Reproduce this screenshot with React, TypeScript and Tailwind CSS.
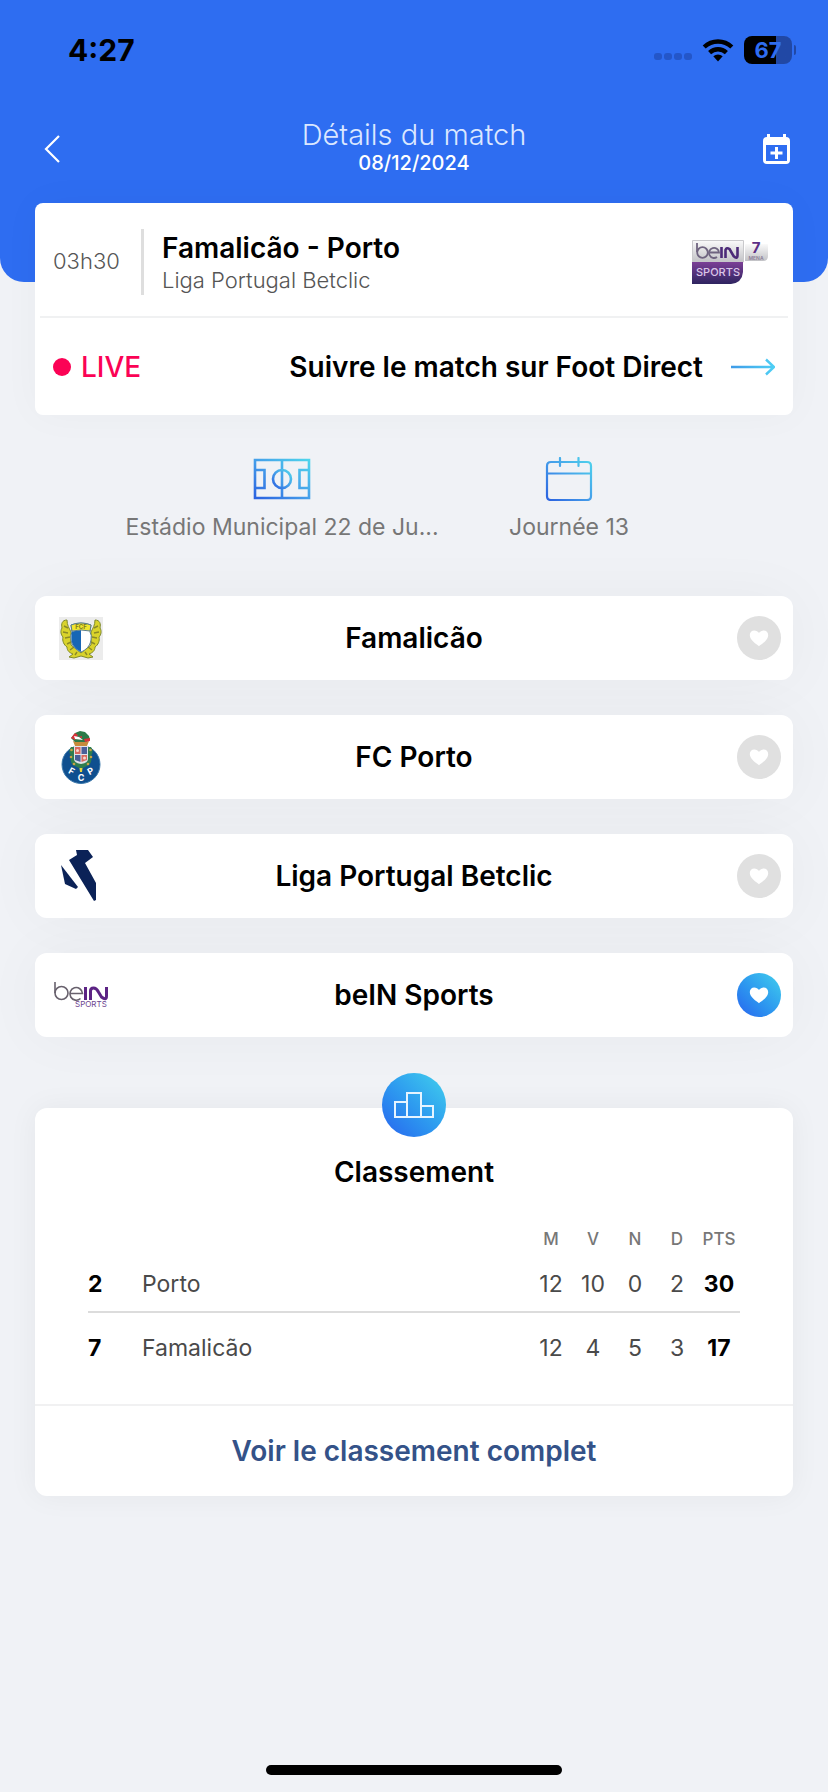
import { useState } from "react";
import type { ReactNode } from "react";

const FamalicaoLogo = () => (
  <svg width="44" height="43" viewBox="0 0 44 43" aria-hidden="true">
    <rect width="44" height="43" fill="#ececec" />
    <path
      d="M8 3c-5 0-6 4-5 8-2 3-1 7 1 9-1 4 1 8 4 10 0 4 3 6 6 7l-4 3 5 1 7-2 7 2 5-1-4-3c3-1 6-3 6-7 3-2 5-6 4-10 2-2 3-6 1-9 1-4 0-8-5-8 0 5-2 8-4 12v13l-10 8-10-8V15C10 11 8 8 8 3z"
      fill="#d9d32b"
      stroke="#7f8a2c"
      strokeWidth="1"
    />
    <path
      d="M5 9l4 2M4 15l5 1M6 21l5-1M8 27l4-2M11 33l4-3M39 9l-4 2M40 15l-5 1M38 21l-5-1M36 27l-4-2M33 33l-4-3M16 38l2-3M28 38l-2-3"
      stroke="#8b8a26"
      strokeWidth="1.4"
      fill="none"
    />
    <path
      d="M12 8q10-4 20 0l-1 7q2 3 1 8c-1 6-5 10-10 12-5-2-9-6-10-12q-1-5 1-8z"
      fill="#fff"
      stroke="#5d7f8e"
      strokeWidth="1"
    />
    <path d="M22 13v21.500c-5-2-9-6-9.500-12q-.5-5 .5-8z" fill="#1766b5" />
    <path d="M12 8q10-4 20 0l-1 6q-9-2-18 0z" fill="#f0e62f" stroke="#5d7f8e" strokeWidth="1" />
    <text x="22" y="12" textAnchor="middle" fontSize="6" fontWeight="700" fill="#7d7a1e">
      FCF
    </text>
  </svg>
);

const PortoLogo = () => (
  <svg width="40" height="55" viewBox="0 0 40 55" aria-hidden="true">
    <circle cx="20" cy="34.500" r="19" fill="#0f4f8f" stroke="#3b78ab" strokeWidth="1" />
    <path
      d="M10 17c-3 4-1 7 0 9-1 4 0 7 2 9l8 4 8-4c2-2 3-5 2-9 1-2 3-5 0-9z"
      fill="#2f7d4f"
    />
    <g fill="#c9a245">
      <circle cx="10.500" cy="20" r="1.300" />
      <circle cx="10" cy="27" r="1.300" />
      <circle cx="29.500" cy="20" r="1.300" />
      <circle cx="30" cy="27" r="1.300" />
      <circle cx="13" cy="34" r="1.300" />
      <circle cx="27" cy="34" r="1.300" />
    </g>
    <path d="M13 16h14v13q0 4-7 5-7-1-7-5z" fill="#dfe3ea" />
    <path d="M14 17h5.500v7H14zM20.500 25H26v5l-5.500 2z" fill="#d9695f" />
    <path d="M20.500 17H26v7h-5.500zM14 25h5.500v7L14 30z" fill="#4a5f98" />
    <circle cx="16.500" cy="20.500" r="1.500" fill="#f2d9d0" />
    <circle cx="23.500" cy="28" r="1.500" fill="#f2d9d0" />
    <path d="M12 11l2 5h12l2-5-4 1-4-1-4 1z" fill="#c58b3a" />
    <path d="M10 8l4-5 5-2 5 1 4 4 1 4-4 2H14z" fill="#2c7a48" />
    <path d="M10 8l4-5 3 2-3 5zM23 9l6-1v3l-5 1zM17 7l4-1v2z" fill="#d8323a" />
    <path d="M13 6l5 1 4 3-8-1z" fill="#fff" />
    <path d="M18.500 38h3l-.5 4h-2z" fill="#e8d33e" />
    <g fill="#fff" fontSize="9" fontWeight="700" textAnchor="middle">
      <text transform="translate(9 44) rotate(28)">F</text>
      <text x="20" y="51">
        C
      </text>
      <text transform="translate(31 44) rotate(-28)">P</text>
    </g>
  </svg>
);

const LigaLogo = () => (
  <svg width="40" height="52" viewBox="0 0 40 52" fill="#0b2257" aria-hidden="true">
    <path d="M15 0h12l5 7-8 6 11 20v17l-2 1L8 10l8-5z" />
    <path d="M0 15l17 22-2 2-11-5z" />
  </svg>
);

const BeinLogo = () => (
  <svg width="54" height="28" viewBox="0 0 54 28" fill="none" aria-hidden="true">
    <g stroke="#68616d" strokeWidth="1.600">
      <path d="M1 1v11" />
      <circle cx="7.500" cy="12" r="6.500" />
      <path d="M16 12.500h12.500a6.300 6.300 0 1 0-2 5" />
    </g>
    <path d="M31.500 6v13M36.500 19v-9q0-3 3-3t5 4l3 5q5 4 5-1V6" stroke="#5c2384" strokeWidth="3" />
    <text x="21" y="26" fontSize="8" fill="#6d4590">
      SPORTS
    </text>
  </svg>
);

const ChannelLogo = () => (
  <svg
    className="overflow-visible"
    width="76"
    height="44"
    viewBox="0 0 76 44"
    fill="none"
    role="img"
    aria-label="beIN Sports 7"
  >
    <defs>
      <linearGradient id="silver" x1="0" y1="0" x2="0" y2="1">
        <stop offset="0" stopColor="#fafafa" />
        <stop offset="1" stopColor="#c2c2c6" />
      </linearGradient>
      <linearGradient id="purple" x1="0" y1="0" x2="0" y2="1">
        <stop offset="0" stopColor="#7b3f96" />
        <stop offset="1" stopColor="#2e2460" />
      </linearGradient>
    </defs>
    <path d="M.5.500h51V22H.5z" fill="url(#silver)" stroke="#c9c9cc" />
    <path d="M0 22h51v10q-1 11-12 12H0z" fill="url(#purple)" />
    <g stroke="#6f6480" strokeWidth="1.800">
      <path d="M5 3v9" />
      <circle cx="10.500" cy="12.500" r="5.300" />
      <path d="M18 12.500h9a5 5 0 1 0-2 4.500" />
    </g>
    <path d="M29.500 7v11M33.500 18v-8q1-3 4-1l4 7q4 4 4-1V7" stroke="#4c2a78" strokeWidth="2.600" />
    <text x="4" y="36" fontSize="11" fontWeight="500" fill="#d9c6e8">
      SPORTS
    </text>
    <path d="M53 4h23v12q0 5-5 5H53z" fill="url(#silver)" />
    <text x="64" y="13" textAnchor="middle" fontSize="15" fontWeight="700" fill="#5b2f86">
      7
    </text>
    <text x="64" y="20" textAnchor="middle" fontSize="5" fontWeight="600" fill="#8b7f99">
      MENA
    </text>
  </svg>
);

const IconGradient = ({ id }: { id: string }) => (
  <linearGradient id={id} x1="0" y1="1" x2="1" y2="0">
    <stop offset="0" stopColor="#2b62e0" />
    <stop offset="0.5" stopColor="#459fea" />
    <stop offset="1" stopColor="#4fd5ec" />
  </linearGradient>
);

const PitchIcon = () => (
  <svg
    width="58"
    height="42"
    viewBox="0 0 58 42"
    fill="none"
    stroke="url(#pitch)"
    strokeWidth="2.600"
    aria-hidden="true"
  >
    <defs>
      <IconGradient id="pitch" />
    </defs>
    <path d="M2 2h54v38H2zM29 2v38M2 12h9.500v18H2M56 12h-9.500v18H56" />
    <circle cx="29" cy="21" r="9" />
  </svg>
);

const CalendarIcon = () => (
  <svg
    width="48"
    height="44"
    viewBox="0 0 48 44"
    fill="none"
    stroke="url(#calendar)"
    strokeWidth="2.200"
    strokeLinecap="round"
    aria-hidden="true"
  >
    <defs>
      <IconGradient id="calendar" />
    </defs>
    <path d="M6 5h36q4 0 4 4v30q0 4-4 4H6q-4 0-4-4V9q0-4 4-4zM2 16.500h44M15 1v8M33.500 1v8" />
  </svg>
);

const HeartIcon = () => (
  <svg width="20" height="18" viewBox="0 0 20 18" fill="#fff" aria-hidden="true">
    <path d="M10 17.200C7.500 15.200.8 11.300.8 6 .8 3.300 2.800 1.400 5.200 1.400 7.200 1.400 9 2.400 10 4c1-1.600 2.800-2.600 4.800-2.600 2.400 0 4.400 1.900 4.400 4.600 0 5.300-6.700 9.200-9.200 11.200z" />
  </svg>
);

const StatusBar = () => (
  <div className="flex h-25 items-center justify-between pr-8 pl-17">
    <span className="text-[30px] font-bold text-black">4:27</span>
    <div className="flex items-center gap-2.5">
      <svg width="38" height="24" viewBox="0 0 38 24" fill="#2456c8" aria-hidden="true">
        <rect x="0" y="15" width="8" height="7" rx="3" />
        <rect x="10" y="15" width="8" height="7" rx="3" />
        <rect x="20" y="15" width="8" height="7" rx="3" />
        <rect x="30" y="15" width="8" height="7" rx="3" />
      </svg>
      <svg width="32" height="24" viewBox="0 0 32 24" aria-hidden="true">
        <path
          d="M2.200 9a20 20 0 0 1 27.600 0M7.600 14.600a12.300 12.300 0 0 1 16.800 0"
          fill="none"
          stroke="#000"
          strokeWidth="4.400"
        />
        <path d="M11.300 18.300a7 7 0 0 1 9.400 0L16 23.500z" />
      </svg>
      <div className="flex items-center gap-0.5">
        <div className="flex h-7 w-12 items-center justify-center rounded-lg bg-linear-to-r from-black from-66% to-[#2148a5] to-66% text-[22px] font-bold text-[#2f6df0]">
          67
        </div>
        <div className="h-2.5 w-0.5 rounded-r-full bg-[#2148a5]" />
      </div>
    </div>
  </div>
);

type Favorite = {
  name: string;
  logo: ReactNode;
  liked: boolean;
};

const initialFavorites: Favorite[] = [
  { name: "Famalicão", logo: <FamalicaoLogo />, liked: false },
  { name: "FC Porto", logo: <PortoLogo />, liked: false },
  { name: "Liga Portugal Betclic", logo: <LigaLogo />, liked: false },
  { name: "beIN Sports", logo: <BeinLogo />, liked: true },
];

const standings = [
  { rank: 2, team: "Porto", stats: [12, 10, 0, 2], points: 30 },
  { rank: 7, team: "Famalicão", stats: [12, 4, 5, 3], points: 17 },
];

const MatchDetails = () => {
  const [favorites, setFavorites] = useState(initialFavorites);

  const toggleFavorite = (name: string) => {
    setFavorites((prev) =>
      prev.map((item) => (item.name === name ? { ...item, liked: !item.liked } : item))
    );
  };

  return (
    <div className="flex min-h-screen flex-col bg-[#f0f2f6] font-['Inter','Noto_Sans',sans-serif] text-black">
      <header className="rounded-b-3xl bg-[#2e6df1] pb-[84px]">
        <StatusBar />
        <div className="grid h-[98px] grid-cols-[60px_1fr_60px] items-center px-8">
          <button type="button" aria-label="Retour" className="justify-self-start p-3">
            <svg
              width="16"
              height="28"
              viewBox="0 0 16 28"
              fill="none"
              stroke="#fff"
              strokeWidth="2.200"
              aria-hidden="true"
            >
              <path d="M15 1L2 14l13 13" />
            </svg>
          </button>
          <div className="pb-1 text-center">
            <h1 className="text-[29px] leading-8 font-light text-[#dbe7ff]">Détails du match</h1>
            <p className="text-[20px] leading-6 font-medium text-white">08/12/2024</p>
          </div>
          <button type="button" aria-label="Ajouter au calendrier" className="justify-self-end p-1.5">
            <svg width="27" height="30" viewBox="0 0 27 30" aria-hidden="true">
              <path
                d="M4 0h3v3h13V0h3v3q4 0 4 4v19q0 4-4 4H4q-4 0-4-4V7q0-4 4-4zM3 11v16h21V11z"
                fill="#fff"
                fillRule="evenodd"
              />
              <path d="M13.500 13v12M7.500 19h12" stroke="#fff" strokeWidth="3" />
            </svg>
          </button>
        </div>
      </header>

      <main className="-mt-[79px] flex flex-col px-[35px]">
        <section className="rounded-lg bg-white shadow-[0_0_40px_rgba(0,0,0,0.03)]">
          <div className="mx-[5px] flex h-[115px] items-center border-b-2 border-[#f0f1f2] pt-1 pr-5 pl-[13px]">
            <span className="w-[88px] text-[22px] font-light text-[#555]">03h30</span>
            <div className="h-[66px] w-[3px] bg-[#dedede]" />
            <div className="flex-1 pl-[18px]">
              <h2 className="text-[28px] leading-9 font-semibold">Famalicão - Porto</h2>
              <p className="text-[22px] leading-7 font-light text-[#555]">Liga Portugal Betclic</p>
            </div>
            <ChannelLogo />
          </div>
          <a href="#live" className="flex h-[97px] items-center px-[18px]">
            <span className="size-[18px] rounded-full bg-[#fb0255]" />
            <span className="ml-2.5 text-[28px] font-medium text-[#fb0255]">LIVE</span>
            <span className="ml-auto text-[28px] font-semibold">Suivre le match sur Foot Direct</span>
            <svg
              className="ml-7"
              width="44"
              height="18"
              viewBox="0 0 44 18"
              fill="none"
              strokeWidth="2.400"
              aria-hidden="true"
            >
              <defs>
                <linearGradient id="arrow" gradientUnits="userSpaceOnUse" x1="0" y1="0" x2="44" y2="0">
                  <stop offset="0" stopColor="#3f9be8" />
                  <stop offset="1" stopColor="#4fd0f5" />
                </linearGradient>
              </defs>
              <path d="M0 9h42M35 1.500L43 9l-8 7.500" stroke="url(#arrow)" />
            </svg>
          </a>
        </section>

        <div className="grid grid-cols-[380px_194px] justify-center pt-10 pr-[70px] text-[23px] text-[#777]">
          <div className="flex flex-col items-center gap-2">
            <div className="flex h-12 items-center">
              <PitchIcon />
            </div>
            <p className="max-w-[320px] truncate leading-8">Estádio Municipal 22 de Ju...</p>
          </div>
          <div className="flex flex-col items-center gap-2">
            <div className="flex h-12 items-center">
              <CalendarIcon />
            </div>
            <p className="leading-8">Journée 13</p>
          </div>
        </div>

        <ul className="isolate mt-[53px] flex flex-col gap-[35px]">
          {favorites.map((item) => (
            <li
              key={item.name}
              className="relative grid h-21 grid-cols-[68px_1fr_68px] items-center rounded-xl bg-white px-3 before:absolute before:inset-0 before:-z-10 before:rounded-xl before:shadow-[0_0_60px_rgba(0,0,0,0.04)]"
            >
              <div className="flex justify-center">{item.logo}</div>
              <h3 className="text-center text-[28px] leading-9 font-semibold">{item.name}</h3>
              <button
                type="button"
                onClick={() => toggleFavorite(item.name)}
                aria-label={`Favori ${item.name}`}
                aria-pressed={item.liked}
                className={`flex size-11 items-center justify-center justify-self-end rounded-full ${
                  item.liked ? "bg-linear-to-tr from-[#2b62ee] to-[#44cfec]" : "bg-[#e0e0e0]"
                }`}
              >
                <HeartIcon />
              </button>
            </li>
          ))}
        </ul>

        <section className="relative mt-[71px] rounded-xl bg-white pt-12 shadow-[0_0_30px_rgba(0,0,0,0.05)]">
          <div className="absolute -top-[35px] left-1/2 flex size-16 -translate-x-1/2 items-center justify-center rounded-full bg-linear-to-tr from-[#2b62ee] to-[#44d0ec]">
            <svg
              width="40"
              height="26"
              viewBox="0 0 40 26"
              fill="none"
              stroke="#e6f4ff"
              strokeWidth="2"
              aria-hidden="true"
            >
              <path d="M13 25H1V10h12M13 25V1h14v24zM27 25h12V14H27" />
            </svg>
          </div>
          <h2 className="text-center text-[28px] leading-8 font-semibold">Classement</h2>
          <div className="px-[53px] pb-5">
            <table className="mt-[34px] w-full table-fixed text-center text-[23px]">
              <colgroup>
                <col className="w-[54px]" />
                <col />
                <col className="w-[42px]" />
                <col className="w-[42px]" />
                <col className="w-[42px]" />
                <col className="w-[42px]" />
                <col className="w-[42px]" />
              </colgroup>
              <thead>
                <tr className="h-9 text-[17px] text-[#777]">
                  <td />
                  <td />
                  <th className="font-medium">M</th>
                  <th className="font-medium">V</th>
                  <th className="font-medium">N</th>
                  <th className="font-medium">D</th>
                  <th className="font-medium">PTS</th>
                </tr>
              </thead>
              <tbody>
                {standings.map((row) => (
                  <tr
                    key={row.rank}
                    className="h-[72px] text-[#4a4a4a] first:h-[54px] first:border-b-2 first:border-[#dcdcdc]"
                  >
                    <td className="text-left font-bold text-black">{row.rank}</td>
                    <th className="text-left font-normal">{row.team}</th>
                    {row.stats.map((value, index) => (
                      <td key={index}>{value}</td>
                    ))}
                    <td className="font-bold text-black">{row.points}</td>
                  </tr>
                ))}
              </tbody>
            </table>
          </div>
          <a
            href="#classement"
            className="flex h-23 items-center justify-center border-t-2 border-[#f1f1f2] text-[28px] font-semibold text-[#345288]"
          >
            Voir le classement complet
          </a>
        </section>
      </main>

      <div className="mx-auto mt-auto mb-[17px] h-2.5 w-[296px] rounded-full bg-black" />
    </div>
  );
};

export default MatchDetails;
